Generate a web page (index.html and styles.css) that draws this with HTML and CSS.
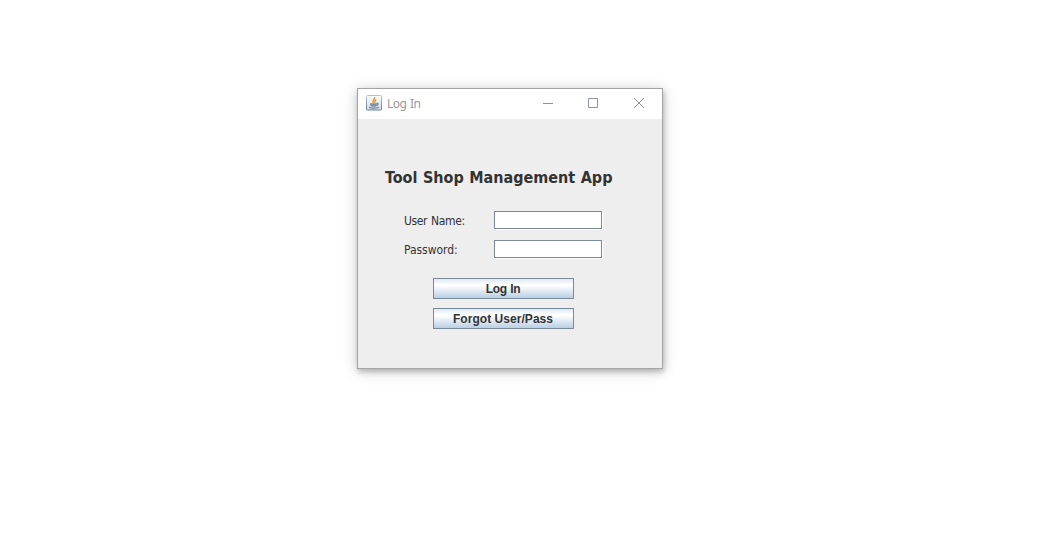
FILE: index.html
```html
<!DOCTYPE html>
<html lang="en">
<head>
<meta charset="utf-8">
<title>Log In</title>
<link rel="stylesheet" href="styles.css">
</head>
<body>
<main class="window">
  <header class="titlebar">
    <svg class="app-icon" width="16" height="16" viewBox="0 0 16 16">
      <defs>
        <linearGradient id="tile" x1="0" y1="0" x2="0" y2="1">
          <stop offset="0" stop-color="#fdfdfd"/><stop offset="1" stop-color="#d3dbe2"/>
        </linearGradient>
        <linearGradient id="edge" x1="0" y1="0" x2="0" y2="1">
          <stop offset="0" stop-color="#b9c1c8"/><stop offset="1" stop-color="#5f7f9f"/>
        </linearGradient>
      </defs>
      <rect x=".5" y=".5" width="15" height="14.5" rx="1" fill="url(#tile)" stroke="url(#edge)"/>
      <path d="M8.5 2.2C9.5 4.2 5.6 5 7.2 8M10.3 4.3C8 5.6 9.5 6.3 8.5 8" fill="none" stroke="#e59a45" stroke-width="1.5"/>
      <path d="M4.2 8.2h6.6v2c0 1-1 1.6-3.2 1.6s-3.4-.6-3.4-1.6z" fill="#7a90a6"/>
      <path d="M10.5 8.4c2.2-.4 2.2 1.7-.2 2.2M3 12.2c2 1.3 7.5 1.3 9.8 0" fill="none" stroke="#6b829a" stroke-width="1.2"/>
    </svg>
    <span class="caption">Log In</span>
    <span class="controls">
      <svg class="control" width="12" height="12" viewBox="0 0 12 12"><path d="M1 6.5h10"/></svg>
      <svg class="control" width="12" height="12" viewBox="0 0 12 12"><path d="M1.5 1.5h9v9h-9z"/></svg>
      <svg class="control" width="12" height="12" viewBox="0 0 12 12"><path d="M1 1l10 10M11 1L1 11"/></svg>
    </span>
  </header>
  <form class="content">
    <h1 class="heading">Tool Shop Management App</h1>
    <div class="fields">
      <label class="label label-user" for="user">User Name:</label><input class="field" id="user" type="text">
      <label class="label label-pass" for="pass">Password:</label><input class="field" id="pass" type="password">
    </div>
    <div class="actions">
      <button class="button button-login" type="button">Log In</button>
      <button class="button button-forgot" type="button">Forgot User/Pass</button>
    </div>
  </form>
</main>
</body>
</html>
```
FILE: styles.css
```css
* { box-sizing: border-box; }
body {
  margin: 0;
  min-height: 100vh;
  padding: 88px 0 0 357px;
  background: #fff;
  font-family: "DejaVu Sans Condensed", "DejaVu Sans", sans-serif;
}
.window {
  width: 306px;
  height: 281px;
  border: 1px solid #a5a5a5;
  background: #eee;
  box-shadow: 0 2px 14px rgba(0, 0, 0, .2), 1px 3px 5px rgba(0, 0, 0, .2);
}
.titlebar {
  display: flex;
  align-items: center;
  height: 30px;
  padding: 0 17px 1px 8px;
  background: #fff;
}
.app-icon { margin-top: -1px; }
.caption {
  padding-left: 5px;
  color: #999;
  font: 12px/16px "Noto Sans", sans-serif;
  letter-spacing: -.5px;
  word-spacing: 1px;
}
.controls {
  display: flex;
  gap: 34px;
  margin: -2px 0 0 auto;
}
.control { fill: none; stroke: #8f939b; flex: none; }
.control:first-child { margin-right: -1px; }
.content { padding: 48px 0 0 27px; }
.heading {
  margin: 0;
  color: #333;
  font-size: 16px;
  font-weight: bold;
  line-height: 22px;
  letter-spacing: 0;
  word-spacing: .5px;
  white-space: nowrap;
}
.fields {
  display: grid;
  grid-template-columns: 90px 108px;
  row-gap: 11px;
  padding: 22px 0 0 19px;
}
.label {
  color: #333;
  font-size: 12px;
  line-height: 21px;
  height: 18px;
  white-space: nowrap;
}
.label-user { letter-spacing: -.35px; word-spacing: .7px; }
.label-pass { letter-spacing: -.05px; }
.field {
  width: 108px;
  height: 18px;
  padding: 0 2px;
  border: 1px solid #7a8a99;
  border-radius: 0;
  outline: 0;
  background: #fff;
  box-shadow: 1px 1px 0 #fff;
}
.actions {
  display: flex;
  flex-direction: column;
  gap: 9px;
  padding: 20px 0 0 48px;
}
.button {
  width: 141px;
  height: 21px;
  padding: 2px 1px 0 0;
  border: 1px solid #7a8a99;
  border-radius: 0;
  background: linear-gradient(#dde8f3 0%, #fff 30%, #fff 35%, #b8cfe5 100%);
  color: #333;
  font: bold 12px/17px "Liberation Sans", Arial, sans-serif;
}
.button-login { letter-spacing: -.4px; word-spacing: .7px; }
.button-forgot { letter-spacing: .05px; }
```
